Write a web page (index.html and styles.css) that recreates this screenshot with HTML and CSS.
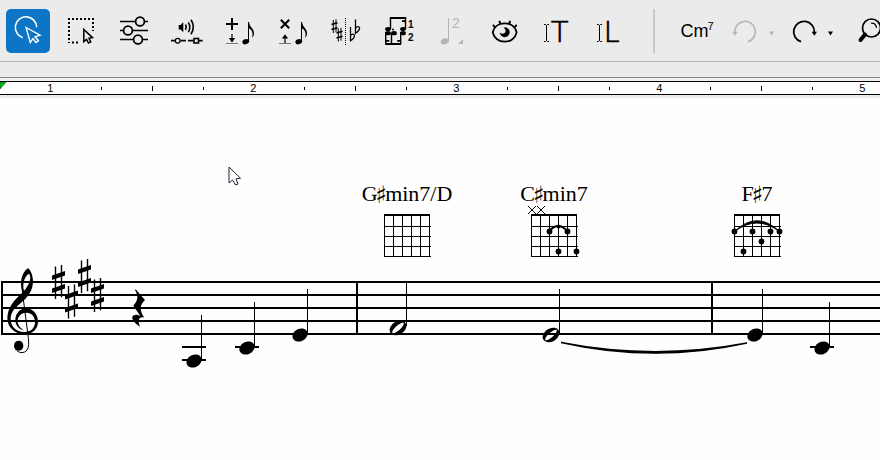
FILE: index.html
```html
<!DOCTYPE html>
<html lang="en">
<head>
    <meta charset="UTF-8" />
    <meta name="viewport" content="width=device-width, initial-scale=1" />
    <title>Notation editor</title>
    <link rel="stylesheet" href="styles.css">
</head>
<body>
<header class="toolbar">
    <div class="tools">
        <button type="button" class="tool active" aria-label="Select">
            <svg viewBox="0 0 44 44" fill="none" stroke="currentColor" stroke-width="1.6">
                <path d="M16.7 28.7A10.7 10.7 0 1 1 30.7 18.2"/>
                <path d="M20 18.5L34 26.2L29 27.8L32.5 31.7L30 33.5L27 29.6L24.3 33.5Z" stroke-width="1.4"/>
            </svg>
        </button>
        <button type="button" class="tool" aria-label="Select area">
            <svg viewBox="0 0 44 44" fill="none" stroke="currentColor">
                <path d="M9 10H35M10 13V34M34 13V22M13 33.5H20" stroke-width="2" stroke-dasharray="2 2"/>
                <path d="M24.8 20.5V32.7L27.6 30.4L29.5 34L31.7 33L30 29.3L33.5 28.6Z" stroke-width="1.5"/>
            </svg>
        </button>
        <button type="button" class="tool" aria-label="Mixer settings">
            <svg viewBox="0 0 44 44" fill="none" stroke="currentColor" stroke-width="1.7">
                <path d="M8 12.5H23.5M32.5 12.5H36M8 21.5H11.5M20.5 21.5H36M8 30.5H21.5M30.5 30.5H36"/>
                <circle cx="28" cy="12.5" r="4.4"/>
                <circle cx="16" cy="21.5" r="4.4"/>
                <circle cx="26" cy="30.5" r="4.4"/>
            </svg>
        </button>
        <button type="button" class="tool" aria-label="Playback">
            <svg viewBox="0 0 44 44" fill="none" stroke="currentColor" stroke-width="1.6">
                <path d="M13.7 16H15.5L18.3 13.3V23.3L15.5 20.5H13.7Z" fill="currentColor" stroke="none"/>
                <path d="M20.5 15.5Q22 18 20.5 20.8M23.3 13.3Q26.3 18.2 23.3 23.2M26 10.8Q30.6 18 26 25.3"/>
                <path d="M6 31.6H10M15.3 31.6H21M23 31.6H28.5M33.5 31.6H37.7"/>
                <circle cx="12.7" cy="31.7" r="2.4" stroke-width="1.2"/>
                <rect x="29" y="29.5" width="4.5" height="4.5"/>
            </svg>
        </button>
        <button type="button" class="tool" aria-label="Insert note">
            <svg viewBox="0 0 44 44" fill="none" stroke="currentColor">
                <path d="M8 15H20M14 9V21" stroke-width="2"/>
                <path d="M8 34.5H20" class="faint"/>
                <path d="M14 25V30" stroke-width="1.2"/>
                <path d="M10.8 29H17.2L14 33.4Z" fill="currentColor" stroke="none"/>
                <use href="#quaver"/>
            </svg>
        </button>
        <button type="button" class="tool" aria-label="Remove note">
            <svg viewBox="0 0 44 44" fill="none" stroke="currentColor">
                <path d="M9.8 10.8L18.2 19.2M18.2 10.8L9.8 19.2" stroke-width="2"/>
                <path d="M8 34.5H20" class="faint"/>
                <path d="M14 28V34" stroke-width="1.2"/>
                <path d="M10.8 29.5H17.2L14 25.2Z" fill="currentColor" stroke="none"/>
                <use href="#quaver"/>
            </svg>
        </button>
        <button type="button" class="tool" aria-label="Sharps and flats">
            <svg viewBox="0 0 44 44" fill="none" stroke="currentColor">
                <path d="M9.3 11V24M12 10.3V23.3M14.3 19.5V32.5M17 18.8V31.8"/>
                <path d="M7.5 15.5L13.5 13.8M7.5 20.5L13.5 18.8M12.5 24L18.5 22.3M12.5 29L18.5 27.3" stroke-width="1.7"/>
                <path d="M21.5 9V36" stroke-dasharray="1 1"/>
                <path d="M26.5 18V31.8C28.5 30.5 30.5 28.5 30.5 26.8C30.5 24.5 28 24.5 26.5 26.5M31.5 10.5V24.3C33.5 23 35.6 21 35.6 19.3C35.6 17 33 17 31.5 19" stroke-width="1.3"/>
            </svg>
        </button>
        <button type="button" class="tool" aria-label="Voices">
            <svg viewBox="0 0 44 44" fill="none" stroke="currentColor">
                <path d="M12.8 9H29.2M8.2 35H24.2" stroke-width="2"/>
                <path d="M13.5 9V20M28.5 9V20M8.7 23V35M14.5 24V35M23.7 23V35" stroke-width="1.4"/>
                <path d="M25 12.2H28.5M9 31.8H12.3M20.2 31.8H23.5" stroke-width="1.8"/>
                <g fill="currentColor" stroke="none">
                    <ellipse cx="11" cy="20" rx="2.9" ry="2.1"/>
                    <ellipse cx="11" cy="24.2" rx="2.9" ry="2.1"/>
                    <ellipse cx="17" cy="24.2" rx="2.9" ry="2.1"/>
                    <ellipse cx="26" cy="20" rx="2.9" ry="2.1"/>
                    <ellipse cx="26" cy="24.2" rx="2.9" ry="2.1"/>
                    <circle cx="16" cy="20.5" r="1"/>
                </g>
                <text x="31" y="19" class="voice-num">1</text>
                <text x="31" y="32" class="voice-num">2</text>
            </svg>
        </button>
        <button type="button" class="tool" aria-label="Note duration" disabled>
            <svg viewBox="0 0 44 44" fill="currentColor">
                <ellipse cx="14.8" cy="32.3" rx="4.1" ry="2.9" transform="rotate(-18 14.8 32.3)"/>
                <path d="M18 9H19V32H18ZM33 30V35H28Z"/>
                <text x="22" y="19" class="tuplet-num">2</text>
            </svg>
        </button>
        <button type="button" class="tool" aria-label="Show and hide">
            <svg viewBox="0 0 44 44" fill="none" stroke="currentColor" stroke-width="1.8">
                <path d="M9.7 23.3C11 17.5 16 14.3 21.7 14.3S32.5 17.5 33.6 23.3C32.5 29.2 27.5 32.7 21.7 32.7S11 29.2 9.7 23.3Z"/>
                <path d="M10 15.8L12.5 18.8M16.3 11.8L17.5 15M27.2 11.8L26 15M33.7 15.8L31 18.8" stroke-width="2"/>
                <path d="M22 18.2A5 5 0 1 1 16.7 23.5C18.5 25.3 21.8 25 22.5 22.8C23 21 22 19.5 20.5 19Z" fill="currentColor" stroke="none"/>
            </svg>
        </button>
        <button type="button" class="tool" aria-label="Edit text">
            <svg viewBox="0 0 44 44" fill="none" stroke="currentColor">
                <path d="M8 15.5H9.5L10.5 16.5L11.5 15.5H13M10.5 16V32M8 32.5H9.5L10.5 31.5L11.5 32.5H13"/>
                <text x="15" y="33" class="glyph">T</text>
            </svg>
        </button>
        <button type="button" class="tool" aria-label="Edit lyrics">
            <svg viewBox="0 0 44 44" fill="none" stroke="currentColor">
                <path d="M8 15.5H9.5L10.5 16.5L11.5 15.5H13M10.5 16V32M8 32.5H9.5L10.5 31.5L11.5 32.5H13"/>
                <text x="15" y="33" class="glyph">L</text>
            </svg>
        </button>
    </div>
    <span class="divider"></span>
    <div class="actions">
        <button type="button" class="tool chord-tool">Cm<sup>7</sup></button>
        <div class="split">
            <button type="button" class="tool" aria-label="Undo" disabled>
                <svg viewBox="0 0 44 44" fill="none" stroke="currentColor" stroke-width="1.6">
                    <path d="M12.7 23.5A10.4 10.4 0 1 1 26 32.7"/>
                    <path d="M10.3 22.7H15.6L13 26.7Z" fill="currentColor" stroke="none"/>
                </svg>
            </button>
            <button type="button" class="drop" aria-label="Undo list" disabled>
                <svg viewBox="0 0 12 44" fill="currentColor"><path d="M3 22.5H8L5.5 26.5Z"/></svg>
            </button>
        </div>
        <div class="split">
            <button type="button" class="tool" aria-label="Redo">
                <svg viewBox="0 0 44 44" fill="none" stroke="currentColor" stroke-width="1.8">
                    <path d="M20 32.7A10.4 10.4 0 1 1 33.4 23.5"/>
                    <path d="M30.6 22.7H36L33.3 26.7Z" fill="currentColor" stroke="none"/>
                </svg>
            </button>
            <button type="button" class="drop" aria-label="Redo list">
                <svg viewBox="0 0 12 44" fill="currentColor"><path d="M3 22.5H8L5.5 26.5Z"/></svg>
            </button>
        </div>
    </div>
    <button type="button" class="tool search" aria-label="Zoom">
        <svg viewBox="0 0 44 44" fill="none" stroke="currentColor">
            <circle cx="22.5" cy="19" r="9" stroke-width="1.7"/>
            <path d="M22 14.2Q27 14 27.5 19" stroke-width="1.2"/>
            <path d="M16 25.5L11.5 31" stroke-width="4" stroke-linecap="round"/>
        </svg>
    </button>
</header>

<div class="strip"></div>

<div class="ruler">
    <svg class="marker" viewBox="0 0 7 8"><path d="M0 0H6L0 7Z"/></svg>
    <div class="measure"><b>1</b><i></i><i class="mid"></i><i></i></div>
    <div class="measure"><b>2</b><i></i><i class="mid"></i><i></i></div>
    <div class="measure"><b>3</b><i></i><i class="mid"></i><i></i></div>
    <div class="measure"><b>4</b><i></i><i class="mid"></i><i></i></div>
    <div class="measure"><b>5</b><i></i><i class="mid"></i><i></i></div>
</div>

<main class="score">
    <figure class="chord chord-1">
        <figcaption>G<span>♯</span>min7/D</figcaption>
        <svg viewBox="0 0 56 54">
            <use href="#fretboard"/>
        </svg>
    </figure>
    <figure class="chord chord-2">
        <figcaption>C<span>♯</span>min7</figcaption>
        <svg viewBox="0 0 56 54">
            <use href="#fretboard"/>
            <path d="M2 3L10 11M10 3L2 11M11 3L19 11M19 3L11 11" stroke="#000"/>
            <path d="M23 28Q32.5 18 41 28" fill="none" stroke="#000" stroke-width="2"/>
            <circle cx="23.5" cy="28.5" r="2.9"/>
            <circle cx="32.5" cy="23.5" r="2"/>
            <circle cx="41.5" cy="28.5" r="2.9"/>
            <circle cx="32.5" cy="48.5" r="2.9"/>
            <circle cx="50.5" cy="48.5" r="2.9"/>
        </svg>
    </figure>
    <figure class="chord chord-3">
        <figcaption>F<span>♯</span>7</figcaption>
        <svg viewBox="0 0 56 54">
            <use href="#fretboard"/>
            <path d="M5.5 28.5Q28 7 50.5 28.5Q28 11.5 5.5 28.5Z" stroke="#000"/>
            <circle cx="5.5" cy="28.5" r="2.9"/>
            <circle cx="23.5" cy="28.5" r="2.9"/>
            <circle cx="41.5" cy="28.5" r="2.9"/>
            <circle cx="50.5" cy="28.5" r="2.9"/>
            <circle cx="32.5" cy="38.5" r="2.9"/>
            <circle cx="14.5" cy="48.5" r="2.9"/>
        </svg>
    </figure>

    <svg class="staff">
        <defs>
            <g id="quaver" stroke="none" fill="#000">
                <ellipse cx="27.8" cy="32.7" rx="3.5" ry="2.5" transform="rotate(-18 27.8 32.7)"/>
                <path d="M30 13H31C31.5 18.5 36.5 19.5 36 25C35.8 26.5 35.2 27.8 34 28.8C35.5 24.5 34 20.5 31 19.5V32.5H30Z"/>
            </g>
            <g id="fretboard" fill="none" stroke="#000">
                <path d="M5 12H51" stroke-width="2"/>
                <path d="M5.5 12V54M14.5 12V54M23.5 12V54M32.5 12V54M41.5 12V54M50.5 12V54"/>
                <path d="M5 23.5H52M5 33.5H52M5 43.5H52M5 53.5H52"/>
            </g>
            <g id="sharp">
                <path d="M-3 -15.5V17M3 -17V15.3" stroke="#000" stroke-width="1.4"/>
                <path d="M-6.5 -6.5L6.5 -11V-6.5L-6.5 -2ZM-6.5 6.5L6.5 2V6.5L-6.5 11Z"/>
            </g>
            <ellipse id="head" rx="8" ry="6.1" transform="rotate(-28)"/>
            <g id="half" transform="rotate(-30)">
                <path fill-rule="evenodd" d="M-9 0A9 6.5 0 1 1 9 0A9 6.5 0 1 1 -9 0ZM-7.4 1.5C-6.5 4.4 7 2 7.4 -1.5C6.5 -4.4 -7 -2 -7.4 1.5Z"/>
            </g>
        </defs>

        <!-- staff lines and barlines -->
        <g stroke="#000" stroke-width="2">
            <line x1="1" y1="32" x2="100%" y2="32"/>
            <line x1="1" y1="45" x2="100%" y2="45"/>
            <line x1="1" y1="58" x2="100%" y2="58"/>
            <line x1="1" y1="71" x2="100%" y2="71"/>
            <line x1="1" y1="84" x2="100%" y2="84"/>
            <path d="M2 31V85M357 31V85M712 31V85"/>
        </g>

        <!-- treble clef -->
        <g transform="translate(0 -10) scale(0.3333)">
            <path fill-rule="evenodd" d="M84 85C72 92 62 112 63 135C64 145 65 152 67 158C45 178 22 200 22 235C22 262 45 283 72 283C98 283 114 266 114 245C114 222 98 205 78 205C60 205 46 222 46 240C46 256 57 267 71 271C58 262 52 252 53 242C54 228 64 218 80 218C97 219 105 232 105 246C105 264 93 276 73 276C50 276 32 262 32 238C31 215 48 202 68 184C86 168 99 150 99 122C98 105 92 90 84 85ZM87 101C95 110 91 131 72 152C67 136 71 110 87 101Z"/>
            <path d="M67 155L84 285C88 315 88 336 66 338C57 338 50 333 46 325" fill="none" stroke="#000" stroke-width="3"/>
            <ellipse cx="56" cy="317" rx="14" ry="15"/>
        </g>

        <!-- key signature -->
        <use href="#sharp" x="58.5" y="32"/>
        <use href="#sharp" x="71.5" y="51.5"/>
        <use href="#sharp" x="84.5" y="26"/>
        <use href="#sharp" x="97.5" y="45"/>

        <!-- quarter rest -->
        <path transform="translate(0 -10) scale(0.3333)" d="M407 148L435 180C421 193 416 208 433 233C420 229 411 237 420 260C402 250 390 232 401 226C409 222 415 225 421 228L400 197C414 182 416 168 405 150Z"/>

        <!-- ledger lines -->
        <path d="M182 97H206M182 110H206M235 97H259M810 97H834" stroke="#000" stroke-width="2"/>

        <!-- notes -->
        <use href="#head" x="194" y="111"/>
        <use href="#head" x="247" y="98"/>
        <use href="#head" x="300" y="85"/>
        <use href="#half" x="398" y="78"/>
        <use href="#half" x="551" y="85"/>
        <use href="#head" x="755" y="85"/>
        <use href="#head" x="822" y="98"/>
        <path d="M201.5 65V110M254.5 52V97M307.5 39V84M406.5 32V76M559.5 39V83M762.5 39V84M829.5 52V97" stroke="#000"/>

        <!-- tie -->
        <path d="M561 92.5Q654 110.5 747 93Q654 113.5 561 92.5Z" stroke="#000" stroke-width="1.3"/>
    </svg>

    <svg class="cursor" viewBox="0 0 14 20"><path d="M1 1V17L4.5 14L7.5 19L10 18L8 12.8L12.5 12.3Z"/></svg>
</main>
</body>
</html>
```
FILE: styles.css
```css
body {
    margin: 0;
    min-height: 100vh;
    display: flex;
    flex-direction: column;
    background-color: #fefefe;
    font-family: "Liberation Sans", Arial, sans-serif;
    color: #000;
}
svg {
    display: block;
}
.toolbar {
    display: flex;
    align-items: center;
    padding: 9px 0 8px 6px;
    background-color: #ebebeb;
    border-bottom: 1px solid #b4b4b4;
    overflow: hidden;
}
.tools {
    display: flex;
    gap: 9px;
}
.actions {
    display: flex;
    gap: 3px;
}
.split {
    display: flex;
}
.tool, .drop {
    flex: none;
    width: 44px;
    height: 44px;
    padding: 0;
    border: 0;
    border-radius: 5px;
    background: none;
    color: #000;
    font-family: inherit;
}
.drop {
    width: 12px;
}
.tool.active {
    background-color: #0d75c5;
    color: #fff;
}
.tool:disabled, .drop:disabled {
    color: #b4b4b4;
}
.faint {
    stroke: #777;
}
.tool text {
    fill: currentColor;
    stroke: none;
}
.voice-num {
    font-size: 10px;
    font-weight: 700;
}
.tuplet-num {
    font-size: 14px;
}
.tool .glyph {
    font-family: Lato, "Open Sans", sans-serif;
    font-size: 30px;
    font-weight: 300;
    stroke: currentColor;
    stroke-width: 0.6px;
}
.divider {
    flex: none;
    width: 2px;
    height: 44px;
    margin: 0 20px;
    background-color: #c8c8c8;
}
.chord-tool {
    font-size: 18px;
    line-height: 44px;
}
.chord-tool sup {
    margin-left: -1px;
    font-size: 11px;
    line-height: 0;
}
.search {
    margin-left: 12px;
}
.strip {
    height: 15px;
    background-color: #ebebeb;
    border-bottom: 1px solid #858594;
}
.ruler {
    position: relative;
    display: flex;
    height: 12px;
    margin-top: 3px;
    padding-left: 25px;
    border-top: 1px solid #000;
    border-bottom: 1px solid #000;
    background-color: #fff;
    box-shadow: 0 -3px #f0f0f0, 0 3px #ebebeb;
    overflow: hidden;
}
.measure {
    flex: none;
    display: grid;
    grid-template-columns: repeat(4, 1fr);
    align-items: center;
    justify-items: center;
    width: 203px;
}
.measure b {
    font-size: 11px;
    font-weight: 400;
    line-height: 12px;
}
.measure i {
    width: 1px;
    height: 3px;
    margin-left: 1px;
    background-color: #000;
}
.measure .mid {
    height: 5px;
}
.marker {
    position: absolute;
    left: 0;
    top: 0;
    width: 7px;
    height: 8px;
    fill: #00c010;
    stroke: #042;
    stroke-width: 0.6;
}
.score {
    position: relative;
    flex: 1;
    padding-top: 155px;
}
.staff {
    width: 100%;
    height: 130px;
}
/* chord symbols sit freely above the staff */
.chord {
    position: absolute;
    top: 87px;
    display: flex;
    flex-direction: column;
    align-items: center;
    width: 100px;
    margin: 0;
}
.chord-1 {
    left: 357px;
}
.chord-2 {
    left: 504px;
}
.chord-3 {
    left: 707px;
}
.chord figcaption {
    height: 21px;
    font-family: "Liberation Serif", "Times New Roman", serif;
    font-size: 22px;
    line-height: 23px;
    white-space: nowrap;
}
.chord figcaption span {
    margin: 0 -2px;
    font-family: "DejaVu Sans", sans-serif;
    font-size: 24px;
    font-weight: 700;
    line-height: 0;
    vertical-align: -2px;
}
.chord svg {
    width: 56px;
    height: 54px;
}
.cursor {
    position: absolute;
    left: 228px;
    top: 71px;
    width: 14px;
    height: 20px;
    fill: #fff;
    stroke: #223;
}
```
